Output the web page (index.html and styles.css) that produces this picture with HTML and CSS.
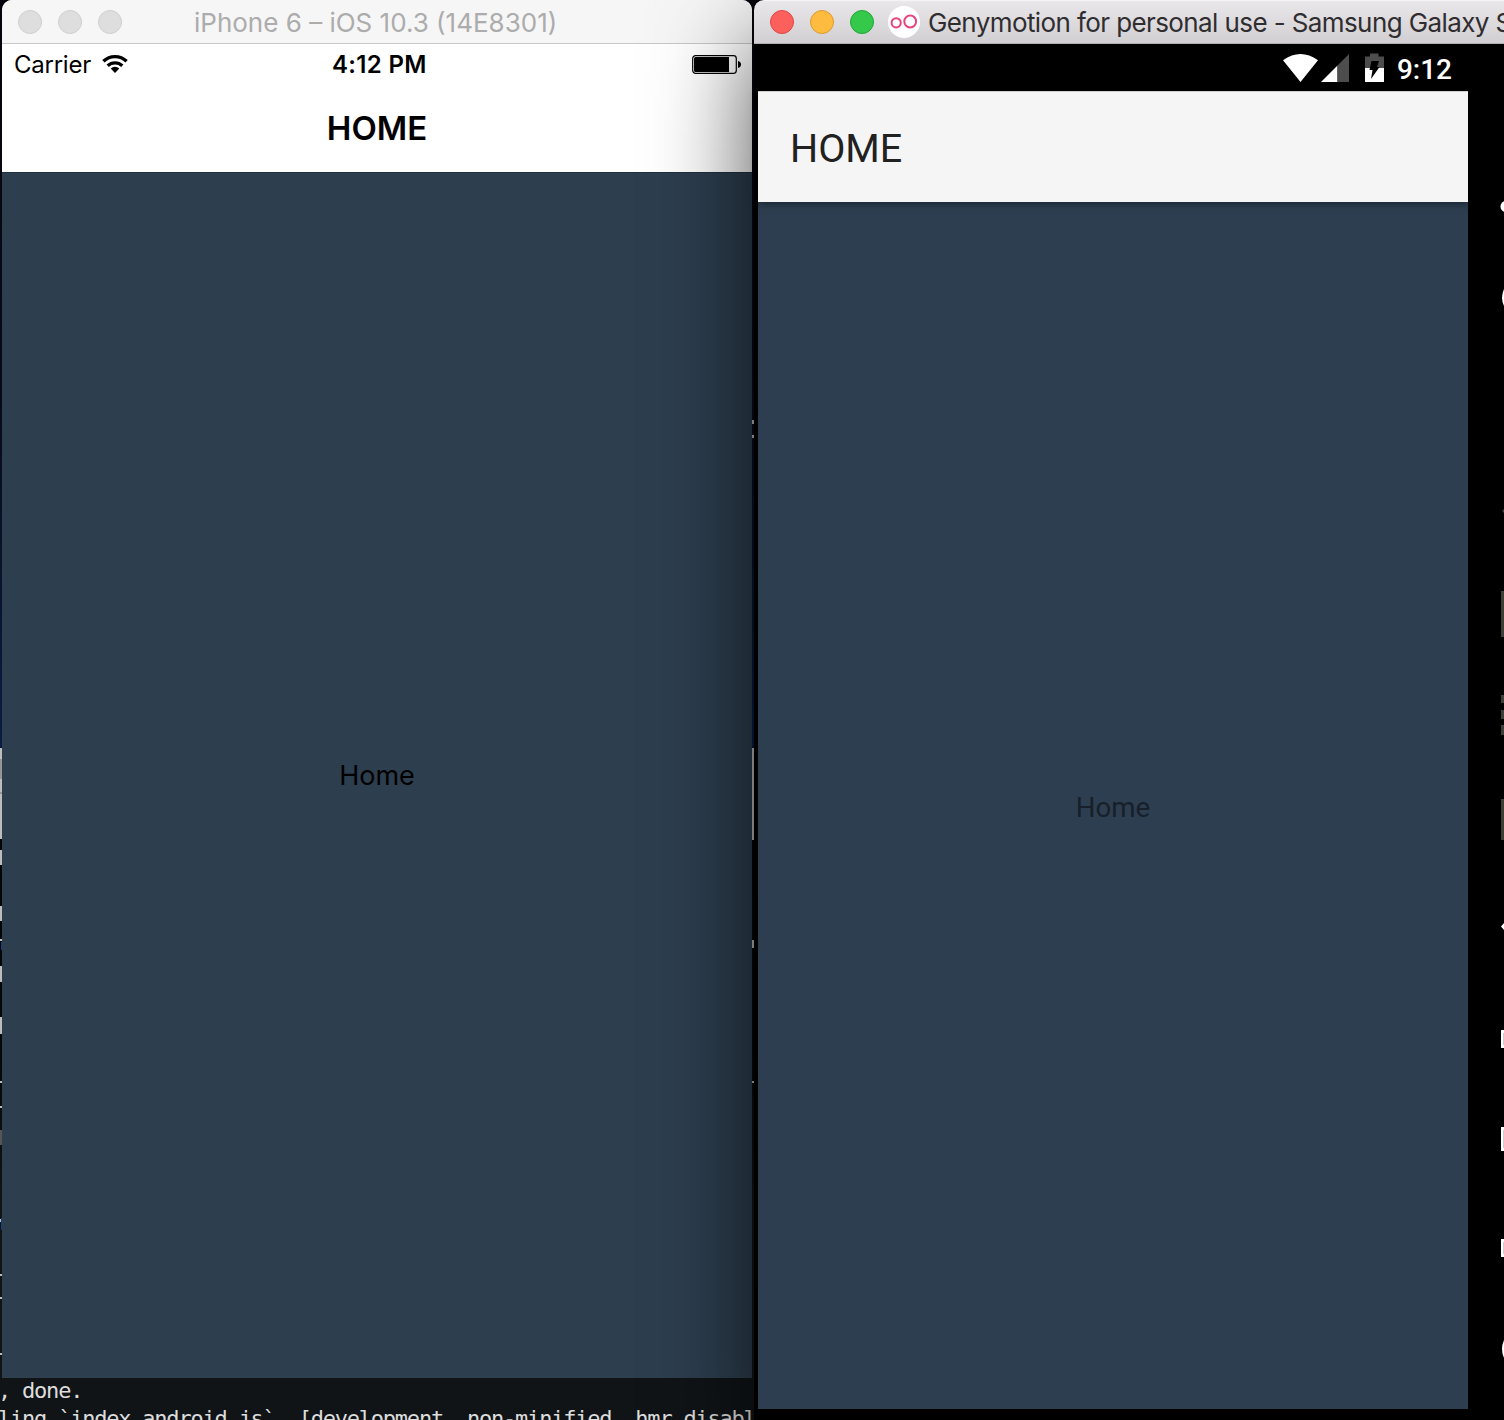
FILE: index.html
```html
<!DOCTYPE html>
<html lang="en">
<head>
<meta charset="utf-8">
<title>Simulators</title>
<link rel="stylesheet" href="styles.css">
</head>
<body>
<main class="desktop">
  <div class="terminal">
    <p>, done.</p>
    <p>ling `index.android.js`  [development, non-minified, hmr disabl</p>
  </div>
  <svg class="specks" width="756" height="1420" shape-rendering="crispEdges">
    <path fill="#bdbdbd" d="M0 748h2v91H0zM0 850h2v15H0zM0 906h2v15H0zM0 939h2v2H0zM0 966h2v16H0zM0 1017h2v17H0zM0 1081h2v2H0zM0 1106h2v2H0zM0 1219h2v3H0zM0 1274h2v2H0zM0 1297h2v2H0zM0 1353h2v2H0zM752 420h2v4h-2zM752 435h2v3h-2zM752 748h2v92h-2zM752 940h2v8h-2zM752 1081h2v2h-2z"/>
    <path fill="#969696" d="M0 759h2v20H0zM0 792h2v2H0z"/>
    <path fill="#555" d="M0 1130h2v15H0z"/>
    <path fill="#174076" d="M1 942h1v8H1zM1 1218h1v12H1z"/>
  </svg>

  <section class="window iphone">
    <header class="titlebar">
      <span class="light"></span><span class="light"></span><span class="light"></span>
      <span class="caption">iPhone 6 – iOS 10.3 (14E8301)</span>
    </header>
    <div class="ios-status">
      <span class="carrier">Carrier
        <svg width="26" height="20" viewBox="0 0 26 20"><g fill="none" stroke="#000" stroke-width="3.3"><path d="M1.4 7.3a16.6 16.6 0 0 1 23.2 0"/><path d="M5.7 11.8a10.500 10.500 0 0 1 14.600 0"/></g><path d="M8.700 14.500a6.200 6.200 0 0 1 8.600 0L13 19z"/></svg>
      </span>
      <span class="clock">4:12 PM</span>
      <svg class="battery" width="50" height="19" viewBox="0 0 50 19"><rect x=".7" y=".7" width="43.6" height="17.6" rx="2.8" fill="#fff" stroke="#000" stroke-width="1.2"/><path d="M3.5 2H37v15H3.5Q2 17 2 15.500V3.500Q2 2 3.500 2zM46 6q3 .8 3 3.500T46 13z"/></svg>
    </div>
    <div class="ios-nav">HOME</div>
    <div class="ios-body">Home</div>
  </section>

  <section class="window genymotion">
    <header class="titlebar">
      <span class="light red"></span><span class="light amber"></span><span class="light green"></span>
      <svg class="logo" width="32" height="32" viewBox="0 0 32 32"><circle cx="16" cy="16" r="16" fill="#fff"/><g fill="none" stroke="#e8437c" stroke-width="2"><circle cx="8.2" cy="16.8" r="4.6"/><circle cx="22.2" cy="15.5" r="5.9"/></g></svg>
      <span class="caption">Genymotion for personal use - Samsung Galaxy S</span>
    </header>
    <div class="device">
      <div class="droid-screen">
        <div class="droid-status">
          <svg width="102" height="28" viewBox="0 0 102 28"><path fill="#fff" d="M0 6.200Q17.500-6 35 6.200L17.500 28zM38 28 54.500 11.500V28z"/><path fill="#4d4d4d" d="M54.500 11.500 66 0v28H54.500z"/><path fill="#4d4d4d" d="M82 2.500h5V-.5h8.500v3h5.500V14H82z"/><path fill="#fff" d="M82 14h19v14H82z"/><path d="M88.500 7h7.500l-2 6h2.500l-8.500 12 1.500-9h-3z"/></svg>
          <span class="droid-clock">9:12</span>
        </div>
        <div class="droid-bar">HOME</div>
        <div class="droid-body">Home</div>
      </div>
      <svg class="tools" width="3" height="1376" viewBox="1501 44 3 1376">
        <g fill="#fff"><circle cx="1506" cy="206.500" r="5.500"/><path d="M1504 289q-4 9 0 17zM1504 923v7l-3-3.500zM1501 1030h3v18h-3zM1501 1127h3v24h-3zM1501 1239h3v18h-3zM1504 1340q-4 9 0 18z"/></g>
        <path fill="#ccc" d="M1503 1033h1v12h-1zM1503 1130h1v18h-1zM1503 1242h1v12h-1z"/>
        <path fill="#3f3f3a" d="M1504 509v4l-2-2zM1501 591h3v46h-3zM1501 695h3v8h-3zM1501 710h3v9h-3zM1501 725h3v10h-3zM1501 799h3v41h-3z"/>
      </svg>
    </div>
  </section>
</main>
</body>
</html>
```
FILE: styles.css
```css
* { box-sizing: border-box; margin: 0; }
body { width: 1504px; height: 1420px; overflow: hidden; }
svg { display: block; flex: none; overflow: visible; }

.desktop {
  position: relative;
  width: 1504px;
  height: 1420px;
  overflow: hidden;
  font-family: Inter, "Liberation Sans", sans-serif;
  background: linear-gradient(#05050b 0, #080a18 400px, #0a1c45 747px, #030609 748px, #04080a 1050px, #111416 1200px, #101417 1420px);
}
.terminal {
  position: absolute;
  left: -2px;
  top: 1377px;
  color: #ddd;
  font: 22px/28px "DejaVu Sans Mono", monospace;
  letter-spacing: -1.22px;
}
.terminal p { white-space: pre; }
.specks { position: absolute; left: 0; top: 0; }

.window {
  position: absolute;
  top: 0;
  width: 750px;
  display: flex;
  flex-direction: column;
}
.titlebar {
  display: flex;
  align-items: center;
  height: 44px;
  padding-left: 16px;
  gap: 16px;
  font-size: 26px;
  flex: none;
}
.light {
  width: 24px;
  height: 24px;
  border: 1px solid #cfcfcf;
  border-radius: 50%;
  background: #dedede;
  flex: none;
}
.red { background: #fc605c; border-color: #de4643; }
.amber { background: #fdbc40; border-color: #dd9a2e; }
.green { background: #34c94a; border-color: #21a435; }

.iphone { left: 2px; height: 1378px; border-radius: 10px 10px 0 0; overflow: hidden; background: #fff; }
.iphone .titlebar { background: #f6f6f6; border-bottom: 1px solid #c8c8c8; color: #acacac; }
.iphone .caption { margin-left: 56px; padding-top: 2px; }
.ios-status {
  display: grid;
  grid-template-columns: 330px 1fr 60px;
  align-items: center;
  height: 40px;
  padding-left: 12px;
  font-size: 24px;
}
.carrier { display: flex; align-items: center; gap: 11px; letter-spacing: -.25px; }
.clock { font-weight: 600; margin-left: -12px; letter-spacing: .35px; }
.ios-nav {
  display: flex;
  align-items: center;
  justify-content: center;
  height: 88px;
  padding-bottom: 1px;
  font-size: 33px;
  font-weight: 600;
}
.ios-body {
  flex: 1;
  display: flex;
  align-items: center;
  justify-content: center;
  padding-bottom: 1px;
  background: #2d3e4f;
  border-top: 1px solid #20303d;
  font-size: 27px;
}

.genymotion { left: 754px; height: 1420px; box-shadow: 0 40px 100px rgba(0, 0, 0, .7); border-radius: 10px 0 0 0; }
.genymotion .titlebar {
  background: linear-gradient(#e9e7e9, #d1cfd1);
  border-top: 1px solid #f5f4f5;
  border-bottom: 1px solid #b1afb1;
  border-radius: 10px 0 0 0;
  color: #2f2d30;
  overflow: hidden;
}
.logo { margin-left: -2px; }
.genymotion .caption { margin-left: -8px; padding-top: 1px; white-space: nowrap; letter-spacing: -.6px; }
.device { flex: 1; display: flex; justify-content: space-between; background: #000; padding-left: 4px; }
.droid-screen { width: 710px; height: 1365px; display: flex; flex-direction: column; font-family: Roboto, sans-serif; }
.droid-status {
  display: flex;
  align-items: center;
  justify-content: flex-end;
  gap: 12px;
  height: 47px;
  padding-right: 16px;
  color: #fff;
  font-size: 28px;
  font-weight: 500;
}
.droid-clock { padding-top: 3px; }
.droid-bar {
  position: relative;
  display: flex;
  align-items: center;
  height: 111px;
  padding: 3px 0 0 32px;
  background: #f5f5f5;
  border-top: 1px solid #cfcfcf;
  box-shadow: 0 1px 8px rgba(0, 0, 0, .5);
  color: #212121;
  font-size: 39.5px;
}
.droid-body {
  flex: 1;
  display: flex;
  align-items: center;
  justify-content: center;
  padding-top: 3px;
  background: #2d3e50;
  color: #17202a;
  font-size: 27.7px;
}
```
